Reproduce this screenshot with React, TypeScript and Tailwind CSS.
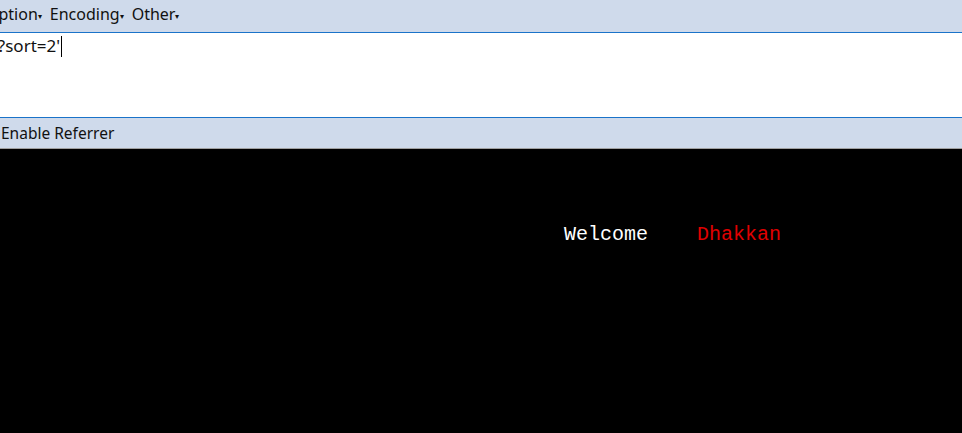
export default function App() {
  return (
    <div className="w-[962px] h-[433px] overflow-hidden bg-black flex flex-col" style={{ fontFamily: '"Noto Sans", "Open Sans", sans-serif' }}>
      {/* menu bar */}
      <div className="h-[32px] bg-[#cfdaeb] flex items-center text-[16px] text-[#111] -ml-[14px] gap-[8px] pb-[4px]">
        <span>Option<span className="text-[8px] align-middle">▾</span></span>
        <span>Encoding<span className="text-[8px] align-middle">▾</span></span>
        <span>Other<span className="text-[8px] align-middle">▾</span></span>
      </div>
      <div className="h-[1px] bg-[#1a73c9]" />

      {/* url box */}
      <div className="h-[84px] bg-white text-[17px] text-[#111] flex items-start pt-0 -ml-[6px]">
        <span>'?sort=2'</span>
        <span className="w-[1px] h-[21px] bg-black mt-[3px] ml-[1px]" />
      </div>
      <div className="h-[1px] bg-[#1a73c9]" />

      {/* referrer bar */}
      <div className="h-[30px] bg-[#cfdaeb] flex items-center text-[15.5px] text-[#111] pl-[1px] pt-[2px]">
        Enable Referrer
      </div>
      <div className="h-[1px] bg-[#a0a0a0]" />

      {/* page */}
      <div className="flex-1 bg-black">
        <div className="flex mt-[73px] pl-[564px] gap-[49px] text-[20px] leading-[26px]" style={{ fontFamily: '"Liberation Mono", monospace' }}>
          <span className="text-white">Welcome</span>
          <span className="text-[#e00000]">Dhakkan</span>
        </div>
      </div>
    </div>
  );
}
